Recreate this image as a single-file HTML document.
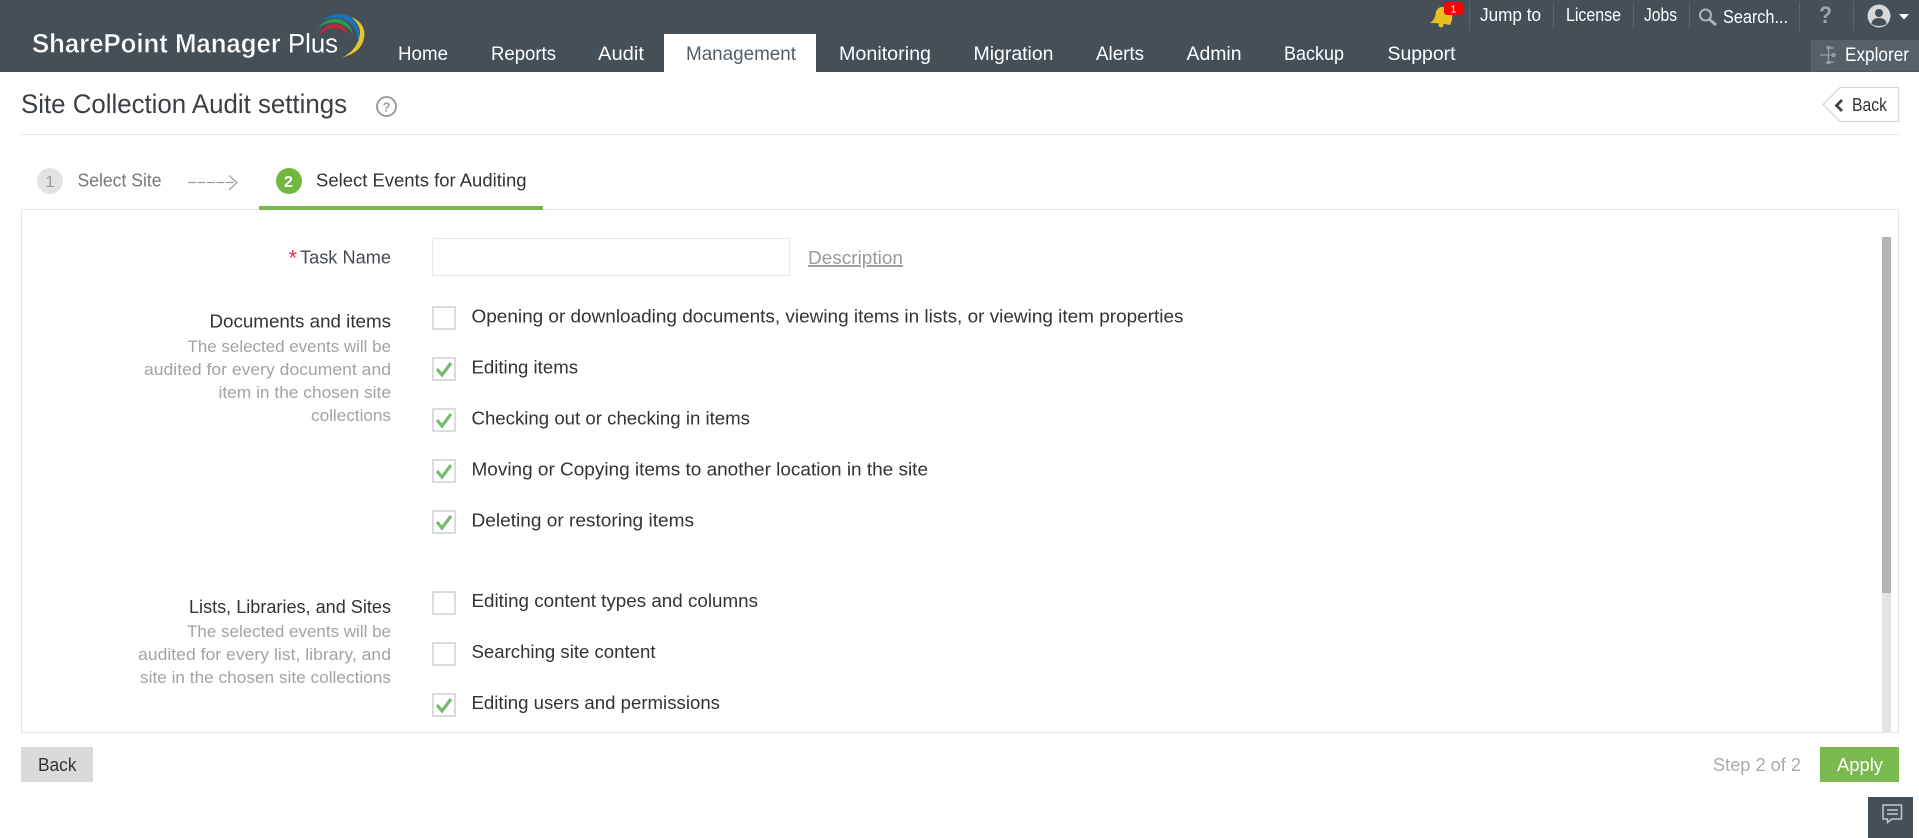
<!DOCTYPE html>
<html lang="en">
<head>
<meta charset="utf-8">
<title>Site Collection Audit settings</title>
<style>
html,body{margin:0;padding:0;background:#fff;width:1919px;height:838px;overflow:hidden}
svg{display:block}
text{font-family:"Liberation Sans",Arial,sans-serif;font-size:18px;fill:#3a3f44}
.n{fill:#fff;font-size:19.5px}
.t{fill:#fff;font-size:18.5px}
.l{font-size:18.5px;fill:#333}
.d{font-size:17px;fill:#a3a3a3}
.box{fill:#fff;stroke:#d2d4d4;stroke-width:1.600}
.chk{fill:none;stroke:#78bd6e;stroke-width:3.200}
.sep{stroke:#5a656d;stroke-width:1}
</style>
</head>
<body>
<svg xmlns="http://www.w3.org/2000/svg" width="1919" height="838" viewBox="0 0 1919 838">
<rect width="1919" height="838" fill="#fff"/>
<!-- header -->
<rect width="1919" height="72" fill="#444f58"/>
<text x="32" y="52.500" textLength="306" lengthAdjust="spacingAndGlyphs" style="font-size:27px;fill:#fff;font-weight:bold;stroke:#444f58;stroke-width:.5">SharePoint Manager <tspan style="font-weight:normal;stroke:none">Plus</tspan></text>
<!-- logo arcs -->
<path d="M351 17 Q364 22 364.500 34 Q364 52 342 57.500 Q358 50 360 33 Q360 24 351 17Z" fill="#eac22a"/>
<path d="M321 21 Q331 13 342 14 Q356 16 359 31 Q360 37 358 42 Q357 26 345 20 Q332 15 321 21Z" fill="#1c72b8"/>
<path d="M318 28 Q326 18 338 19 Q350 21 353 34 Q347 25 338 23 Q328 21 318 28Z" fill="#2d9b4a"/>
<path d="M318 37 Q323 25 334 24 Q344 24 348 34 Q341 28 333 28 Q325 28 318 37Z" fill="#c8243a"/>
<!-- nav -->
<rect x="664" y="34" width="152" height="38" fill="#fff"/>
<text class="n" x="398" y="60" textLength="50" lengthAdjust="spacingAndGlyphs">Home</text>
<text class="n" x="491" y="60" textLength="65" lengthAdjust="spacingAndGlyphs">Reports</text>
<text class="n" x="598" y="60" textLength="46" lengthAdjust="spacingAndGlyphs">Audit</text>
<text class="n" x="686" y="60" textLength="110" lengthAdjust="spacingAndGlyphs" style="fill:#555e66">Management</text>
<text class="n" x="839" y="60" textLength="92" lengthAdjust="spacingAndGlyphs">Monitoring</text>
<text class="n" x="973.500" y="60" textLength="80" lengthAdjust="spacingAndGlyphs">Migration</text>
<text class="n" x="1096" y="60" textLength="48" lengthAdjust="spacingAndGlyphs">Alerts</text>
<text class="n" x="1186.500" y="60" textLength="55" lengthAdjust="spacingAndGlyphs">Admin</text>
<text class="n" x="1284" y="60" textLength="60" lengthAdjust="spacingAndGlyphs">Backup</text>
<text class="n" x="1387.500" y="60" textLength="68" lengthAdjust="spacingAndGlyphs">Support</text>
<!-- bell -->
<g fill="#e6c11f">
<path d="M1430 23 Q1435 20 1436 12 Q1438 6 1444 7 Q1451 8 1452 14 Q1453 20 1450 25 Q1441 23 1430 23Z"/>
<circle cx="1441" cy="25" r="2.500"/>
</g>
<rect x="1444" y="2" width="19" height="13" rx="3" fill="#f00"/>
<text x="1450.500" y="12.500" style="font-size:10.500px;fill:#fff">1</text>
<!-- top links -->
<line class="sep" x1="1469.500" y1="2" x2="1469.500" y2="30"/>
<line class="sep" x1="1553.500" y1="2" x2="1553.500" y2="28"/>
<line class="sep" x1="1633.500" y1="2" x2="1633.500" y2="28"/>
<line class="sep" x1="1689.500" y1="2" x2="1689.500" y2="28"/>
<line class="sep" x1="1799.500" y1="2" x2="1799.500" y2="32"/>
<line class="sep" x1="1853.500" y1="2" x2="1853.500" y2="30"/>
<text class="t" x="1480" y="21" textLength="61" lengthAdjust="spacingAndGlyphs">Jump to</text>
<text class="t" x="1566" y="21" textLength="55" lengthAdjust="spacingAndGlyphs">License</text>
<text class="t" x="1644" y="21" textLength="33" lengthAdjust="spacingAndGlyphs">Jobs</text>
<circle cx="1705.500" cy="15" r="5.500" fill="none" stroke="#aeb3b7" stroke-width="2"/>
<line x1="1709.500" y1="19.500" x2="1716" y2="25" stroke="#aeb3b7" stroke-width="2.800"/>
<text class="t" x="1723" y="23" textLength="65" lengthAdjust="spacingAndGlyphs">Search...</text>
<text x="1819" y="23" textLength="13" lengthAdjust="spacingAndGlyphs" style="font-size:24px;font-weight:bold;fill:#9fa5aa">?</text>
<circle cx="1879" cy="16" r="11.500" fill="#d5d7d9"/>
<circle cx="1879" cy="13" r="4" fill="#444f58"/>
<path d="M1871.500 24 Q1872 18 1879 18 Q1886 18 1886.500 24 Q1879 28 1871.500 24Z" fill="#444f58"/>
<path d="M1899 14 H1909 L1904 19.500Z" fill="#fff"/>
<!-- explorer -->
<rect x="1811" y="40" width="108" height="31.500" fill="#566068"/>
<g fill="none" stroke="#979ea3" stroke-width="1.300">
<path d="M1820 55 H1836 M1828.500 48 V62 M1828.500 48 H1834 M1828.500 62 H1834"/>
</g>
<g fill="#979ea3">
<rect x="1826.500" y="46" width="4" height="3"/>
<rect x="1826.500" y="61" width="4" height="3"/>
<rect x="1832" y="53" width="3" height="4"/>
</g>
<text x="1845" y="61" textLength="64" lengthAdjust="spacingAndGlyphs" style="font-size:19px;fill:#fff">Explorer</text>
<!-- title -->
<text x="21" y="113" textLength="326" lengthAdjust="spacingAndGlyphs" style="font-size:27px;fill:#3a3f44">Site Collection Audit settings</text>
<circle cx="386.500" cy="106.500" r="9.500" fill="#fff" stroke="#9d9d9d" stroke-width="2"/>
<text x="382.500" y="111.500" style="font-size:13px;font-weight:bold;fill:#9d9d9d">?</text>
<path d="M1840 87.500 H1898.500 V121.500 H1840 L1823 104.500Z" fill="#fff" stroke="#d4d6d7" stroke-width="1.300"/>
<path d="M1842 100 L1836.500 105.500 L1842 111" fill="none" stroke="#3d4349" stroke-width="2.800"/>
<text x="1852" y="111" textLength="35" lengthAdjust="spacingAndGlyphs" style="font-size:18.500px;fill:#333">Back</text>
<rect x="21" y="134" width="1878" height="1" fill="#e6e6e6"/>
<!-- steps -->
<ellipse cx="50" cy="181" rx="13" ry="13" fill="#e1e3e5"/>
<text x="45.500" y="187" style="font-size:16px;fill:#9a9a9a">1</text>
<text x="77.500" y="186.500" textLength="84" lengthAdjust="spacingAndGlyphs" style="font-size:18.500px;fill:#777">Select Site</text>
<line x1="188" y1="182.500" x2="235" y2="182.500" stroke="#9c9c9c" stroke-width="1.300" stroke-dasharray="8 1.500"/>
<path d="M229 175.500 L237 182.500 L229 190" fill="none" stroke="#a0a0a0" stroke-width="1.200"/>
<circle cx="289" cy="181" r="13" fill="#72b83f"/>
<text x="284" y="187" style="font-size:16px;font-weight:bold;fill:#fff">2</text>
<text x="316" y="186.500" textLength="210.500" lengthAdjust="spacingAndGlyphs" style="font-size:18.500px;fill:#333">Select Events for Auditing</text>
<!-- panel -->
<rect x="21.500" y="209.500" width="1877" height="523" fill="#fff" stroke="#e6e6e6" stroke-width="1"/>
<rect x="259" y="206" width="284" height="4" fill="#76b84e"/>
<!-- scrollbar -->
<rect x="1882" y="237" width="9" height="495" fill="#e4e4e4"/>
<rect x="1882" y="237" width="9" height="356" fill="#b0b5b8"/>
<!-- task name -->
<text x="288.500" y="265.500" style="font-size:22px;fill:#f0303a">*</text>
<text class="l" x="300" y="263.500" textLength="91" lengthAdjust="spacingAndGlyphs" style="fill:#454b52">Task Name</text>
<rect x="432.500" y="238.500" width="357" height="37" fill="#fff" stroke="#e4e9e9" stroke-width="1"/>
<text x="808" y="264" textLength="95" lengthAdjust="spacingAndGlyphs" style="font-size:18.500px;fill:#999;text-decoration:underline">Description</text>
<!-- docs -->
<text class="l" x="209.500" y="327.500" textLength="181.500" lengthAdjust="spacingAndGlyphs">Documents and items</text>
<text class="d" x="187.500" y="352" textLength="203.500" lengthAdjust="spacingAndGlyphs">The selected events will be</text>
<text class="d" x="144" y="375" textLength="247" lengthAdjust="spacingAndGlyphs">audited for every document and</text>
<text class="d" x="218.500" y="398" textLength="172.500" lengthAdjust="spacingAndGlyphs">item in the chosen site</text>
<text class="d" x="311" y="421" textLength="80" lengthAdjust="spacingAndGlyphs">collections</text>

<rect class="box" x="433" y="307" width="22" height="22"/>
<text class="l" x="471.500" y="322.500" textLength="712" lengthAdjust="spacingAndGlyphs">Opening or downloading documents, viewing items in lists, or viewing item properties</text>
<rect class="box" x="433" y="358" width="22" height="22"/>
<path class="chk" d="M437 369 L442 375 L451 363"/>
<text class="l" x="471.500" y="373.500" textLength="106.500" lengthAdjust="spacingAndGlyphs">Editing items</text>
<rect class="box" x="433" y="409" width="22" height="22"/>
<path class="chk" d="M437 420 L442 426 L451 414"/>
<text class="l" x="471.500" y="424.500" textLength="278.500" lengthAdjust="spacingAndGlyphs">Checking out or checking in items</text>
<rect class="box" x="433" y="460" width="22" height="22"/>
<path class="chk" d="M437 471 L442 477 L451 465"/>
<text class="l" x="471.500" y="475.500" textLength="456.500" lengthAdjust="spacingAndGlyphs">Moving or Copying items to another location in the site</text>
<rect class="box" x="433" y="511" width="22" height="22"/>
<path class="chk" d="M437 522 L442 528 L451 516"/>
<text class="l" x="471.500" y="526.500" textLength="222.500" lengthAdjust="spacingAndGlyphs">Deleting or restoring items</text>
<!-- lists -->
<text class="l" x="189" y="613" textLength="202" lengthAdjust="spacingAndGlyphs">Lists, Libraries, and Sites</text>
<text class="d" x="187" y="637" textLength="204" lengthAdjust="spacingAndGlyphs">The selected events will be</text>
<text class="d" x="138" y="660" textLength="253" lengthAdjust="spacingAndGlyphs">audited for every list, library, and</text>
<text class="d" x="140" y="683" textLength="251" lengthAdjust="spacingAndGlyphs">site in the chosen site collections</text>

<rect class="box" x="433" y="592" width="22" height="22"/>
<text class="l" x="471.500" y="607" textLength="286.500" lengthAdjust="spacingAndGlyphs">Editing content types and columns</text>
<rect class="box" x="433" y="643" width="22" height="22"/>
<text class="l" x="471.500" y="658" textLength="184" lengthAdjust="spacingAndGlyphs">Searching site content</text>
<rect class="box" x="433" y="694" width="22" height="22"/>
<path class="chk" d="M437 705 L442 711 L451 699"/>
<text class="l" x="471.500" y="709" textLength="248.500" lengthAdjust="spacingAndGlyphs">Editing users and permissions</text>
<!-- footer -->
<rect x="21" y="747" width="72" height="35" fill="#d9dadc"/>
<text x="38" y="771" textLength="38.500" lengthAdjust="spacingAndGlyphs" style="font-size:18.500px;fill:#333">Back</text>
<text x="1713" y="771" textLength="88" lengthAdjust="spacingAndGlyphs" style="font-size:18.500px;fill:#aaa">Step 2 of 2</text>
<rect x="1820" y="747" width="79" height="35" fill="#79b94f"/>
<text x="1837" y="771" textLength="46" lengthAdjust="spacingAndGlyphs" style="font-size:18.500px;fill:#fff">Apply</text>
<!-- chat -->
<rect x="1868" y="797" width="45" height="41" fill="#444f58"/>
<path d="M1883 805 H1901.500 V819 H1892 L1887.500 822.500 V819 H1883Z" fill="none" stroke="#c5c9cc" stroke-width="1.500"/>
<path d="M1887 810 H1898 M1887 814 H1898" stroke="#c5c9cc" stroke-width="1.500"/>
</svg>
</body>
</html>
